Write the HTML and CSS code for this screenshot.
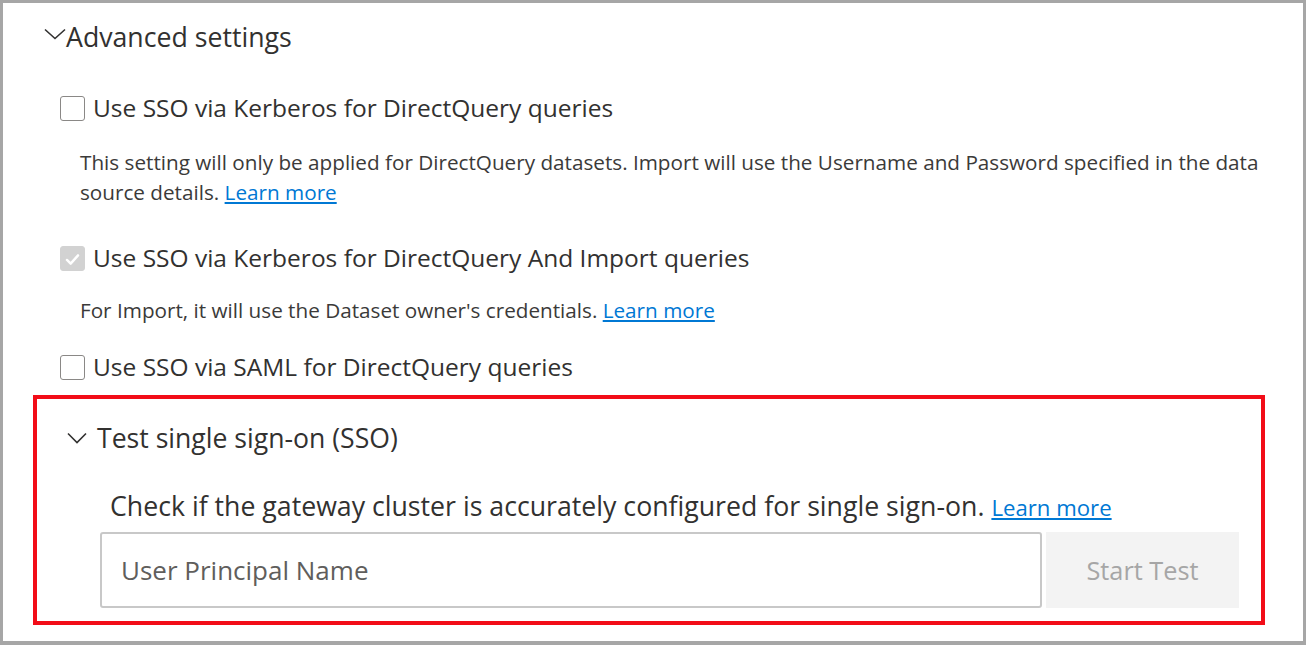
FILE: index.html
```html
<!DOCTYPE html>
<html lang="en">
<head>
<meta charset="utf-8">
<title>Advanced settings</title>
<link rel="stylesheet" href="styles.css">
</head>
<body>
<div class="frame">
  <div class="section-head">
    <svg class="chev chev-lg" viewBox="0 0 22 12" width="22" height="12" aria-hidden="true"><path d="M1 1.5 L11 10.5 L21 1.5" fill="none" stroke="#323130" stroke-width="1.6"/></svg>
    <span>Advanced settings</span>
  </div>

  <label class="option opt-1">
    <span class="box"></span>
    <span class="opt-text">Use SSO via Kerberos for DirectQuery queries</span>
  </label>
  <p class="desc desc-1">This setting will only be applied for DirectQuery datasets. Import will use the Username and Password specified in the data<br>source details. <a href="#">Learn more</a></p>

  <label class="option opt-2">
    <span class="box box-checked">
      <svg viewBox="0 0 25 25" width="25" height="25" aria-hidden="true"><path d="M6.5 13 L10.5 17 L18.5 8" fill="none" stroke="#ffffff" stroke-width="2.6" stroke-linecap="round" stroke-linejoin="round"/></svg>
    </span>
    <span class="opt-text">Use SSO via Kerberos for DirectQuery And Import queries</span>
  </label>
  <p class="desc desc-2">For Import, it will use the Dataset owner's credentials. <a href="#">Learn more</a></p>

  <label class="option opt-3">
    <span class="box"></span>
    <span class="opt-text">Use SSO via SAML for DirectQuery queries</span>
  </label>

  <div class="sso-box">
    <div class="sso-head">
      <svg class="chev chev-sm" viewBox="0 0 20 12" width="20" height="12" aria-hidden="true"><path d="M1 1.5 L10 10.5 L19 1.5" fill="none" stroke="#323130" stroke-width="1.6"/></svg>
      <span>Test single sign-on (SSO)</span>
    </div>
    <p class="sso-desc">Check if the gateway cluster is accurately configured for single sign-on. <a href="#">Learn more</a></p>
    <div class="sso-row">
      <div class="upn-input">User Principal Name</div>
      <div class="start-btn">Start Test</div>
    </div>
  </div>
</div>
</body>
</html>
```

FILE: styles.css
```css
html, body {
  margin: 0;
  padding: 0;
  background: #ffffff;
}

body {
  font-family: "Open Sans", "Noto Sans", "Liberation Sans", sans-serif;
  color: #323130;
}

.frame {
  box-sizing: border-box;
  width: 1306px;
  height: 645px;
  border-style: solid;
  border-color: #a6a6a6;
  border-width: 3px 3px 4px 3px;
  padding: 14px 38px 0 30px;
  display: flex;
  flex-direction: column;
  overflow: hidden;
}

.section-head {
  display: flex;
  align-items: center;
  height: 40px;
  margin-left: 11px;
  font-size: 26.7px;
  line-height: 40px;
  color: #323130;
  white-space: nowrap;
}

.chev-lg {
  margin-right: 0;
  margin-top: -6px;
}

.option {
  display: flex;
  align-items: center;
  height: 30px;
  margin-left: 27px;
  font-size: 24.5px;
  line-height: 30px;
  color: #323130;
  white-space: nowrap;
}

.opt-1 { margin-top: 36px; }
.opt-2 { margin-top: 36px; }
.opt-3 { margin-top: 27px; }

.box {
  box-sizing: border-box;
  width: 25px;
  height: 25px;
  border: 1px solid #8a8886;
  border-radius: 3px;
  margin-right: 8px;
  flex: none;
  display: flex;
}

.box-checked {
  border-color: #d2d2d2;
  background: #d2d2d2;
}

.desc {
  margin: 0 0 0 47px;
  font-size: 20.7px;
  line-height: 30px;
  color: #3b3a39;
  white-space: nowrap;
}

.desc-1 { margin-top: 24px; }
.desc-2 { margin-top: 22px; }

a {
  color: #0078d4;
  text-decoration: underline;
}

.sso-box {
  margin-top: 13px;
  border: 4px solid #f20d18;
  padding: 21px 22px 13px 30px;
  display: flex;
  flex-direction: column;
}

.sso-head {
  display: flex;
  align-items: center;
  height: 36px;
  font-size: 26.6px;
  line-height: 36px;
  color: #323130;
  white-space: nowrap;
}

.chev-sm {
  margin-right: 10px;
}

.sso-desc {
  margin: 32px 0 0 43px;
  height: 36px;
  font-size: 26.7px;
  line-height: 36px;
  color: #323130;
  white-space: nowrap;
}

.sso-desc a {
  font-size: 22.2px;
}

.sso-row {
  display: flex;
  gap: 4px;
  margin-top: 8px;
  margin-left: 33px;
  height: 76px;
}

.upn-input {
  box-sizing: border-box;
  width: 942px;
  height: 76px;
  border: 2px solid #c8c8c8;
  border-radius: 3px;
  padding-left: 19px;
  display: flex;
  align-items: center;
  font-size: 26px;
  color: #605e5c;
}

.start-btn {
  flex: 1;
  background: #f3f3f3;
  display: flex;
  align-items: center;
  justify-content: center;
  font-size: 25.3px;
  color: #a6a6a6;
}
```
